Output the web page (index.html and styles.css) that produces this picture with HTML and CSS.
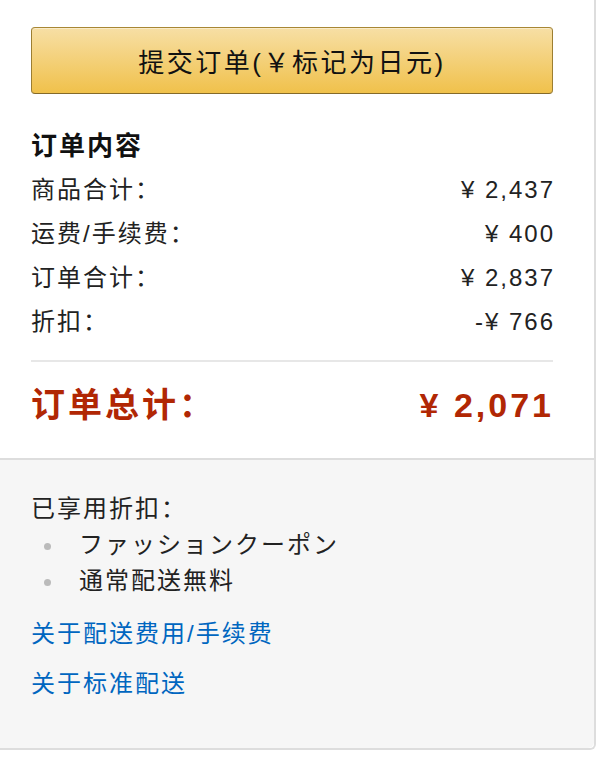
FILE: index.html
```html
<!DOCTYPE html>
<html lang="zh-CN">
<head>
    <meta charset="UTF-8">
    <title>订单内容</title>
    <link rel="stylesheet" href="styles.css">
</head>
<body>
    <div class="summary-box">
        <div class="summary-top">
            <button class="place-order">提交订单(￥标记为日元)</button>

            <h3 class="summary-title">订单内容</h3>
            <div class="row"><span>商品合计：</span><span class="amount">¥ 2,437</span></div>
            <div class="row"><span>运费/手续费：</span><span class="amount">¥ 400</span></div>
            <div class="row"><span>订单合计：</span><span class="amount">¥ 2,837</span></div>
            <div class="row"><span>折扣：</span><span class="amount">-¥ 766</span></div>

            <div class="total-row">
                <span>订单总计：</span>
                <span class="amount">¥ 2,071</span>
            </div>
        </div>

        <div class="summary-bottom">
            <div class="promo-label">已享用折扣：</div>
            <ul class="promo-list">
                <li>ファッションクーポン</li>
                <li>通常配送無料</li>
            </ul>
            <a class="help-link" href="#">关于配送费用/手续费</a>
            <a class="help-link" href="#">关于标准配送</a>
        </div>
    </div>
</body>
</html>
```

FILE: styles.css
```css
body {
    margin: 0;
    background-color: #fff;
    font-family: "Liberation Sans", "Noto Sans CJK SC", sans-serif;
    color: #111;
}
.summary-box {
    width: 594px;
    border-right: 2px solid #ddd;
    border-bottom: 2px solid #ddd;
    border-bottom-right-radius: 6px;
}
.summary-top {
    padding: 27px 41px 31px 31px;
    border-bottom: 2px solid #ddd;
}
.place-order {
    display: block;
    width: 100%;
    height: 67px;
    padding: 0;
    font-family: "Liberation Sans", "Noto Sans CJK SC", sans-serif;
    font-size: 26px;
    letter-spacing: 2.5px;
    color: #111;
    background: linear-gradient(to bottom, #f7dfa5, #f0c14b);
    border: 1px solid;
    border-color: #a88734 #9c7e31 #846a29;
    border-radius: 4px;
    box-shadow: inset 0 1px 0 rgba(255,255,255,0.4);
}
.summary-title {
    margin: 36px 0 6px;
    font-size: 26px;
    letter-spacing: 2px;
    line-height: 32px;
    font-weight: bold;
    color: #111;
}
.row {
    display: flex;
    justify-content: space-between;
    font-size: 24px;
    letter-spacing: 2px;
    line-height: 44px;
    color: #222;
}
.amount {
    margin-right: -2px;
}
.total-row {
    display: flex;
    justify-content: space-between;
    margin-top: 16px;
    padding-top: 21px;
    border-top: 2px solid #e7e7e7;
    font-size: 34px;
    letter-spacing: 3px;
    line-height: 44px;
    font-weight: bold;
    color: #b12704;
}
.total-row .amount {
    margin-right: -1px;
}
.summary-bottom {
    background-color: #f6f6f6;
    padding: 31px 41px 46px 31px;
    border-bottom-right-radius: 6px;
}
.promo-label {
    font-size: 24px;
    letter-spacing: 2px;
    line-height: 36px;
    color: #222;
}
.promo-list {
    margin: 0;
    padding-left: 13px;
    list-style: none;
    font-size: 24px;
    letter-spacing: 2px;
    line-height: 36px;
    color: #222;
}
.promo-list li::before {
    content: "";
    display: inline-block;
    width: 7px;
    height: 7px;
    margin-right: 28px;
    border-radius: 50%;
    background-color: #bbb;
    vertical-align: middle;
}
.help-link {
    display: block;
    width: max-content;
    margin-top: 14px;
    font-size: 24px;
    letter-spacing: 2px;
    line-height: 36px;
    color: #0066c0;
    text-decoration: none;
}
.promo-list + .help-link {
    margin-top: 17px;
}
```
